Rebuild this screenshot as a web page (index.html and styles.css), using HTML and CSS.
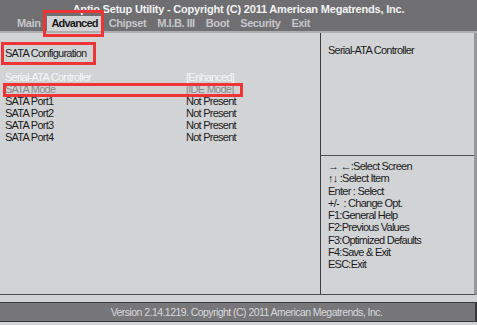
FILE: index.html
```html
<!DOCTYPE html>
<html lang="en">
<head>
    <meta charset="UTF-8">
    <title>Aptio Setup Utility</title>
    <link rel="stylesheet" href="styles.css">
</head>
<body>
    <div class="header">
        <div class="title">Aptio Setup Utility - Copyright (C) 2011 American Megatrends, Inc.</div>
        <div class="tabs">
            <span class="tab">Main</span>
            <span class="tab active">Advanced</span>
            <span class="tab">Chipset</span>
            <span class="tab">M.I.B. III</span>
            <span class="tab">Boot</span>
            <span class="tab">Security</span>
            <span class="tab">Exit</span>
        </div>
    </div>

    <div class="main">
        <div class="left">
            <div class="section"><span class="section-title marked">SATA Configuration</span></div>
            <div class="row selected"><span class="label">Serial-ATA Controller</span><span class="value">[Enhanced]</span></div>
            <div class="row disabled marked-row"><span class="label">SATA Mode</span><span class="value">[IDE Mode]</span></div>
            <div class="row"><span class="label">SATA Port1</span><span class="value">Not Present</span></div>
            <div class="row"><span class="label">SATA Port2</span><span class="value">Not Present</span></div>
            <div class="row"><span class="label">SATA Port3</span><span class="value">Not Present</span></div>
            <div class="row"><span class="label">SATA Port4</span><span class="value">Not Present</span></div>
        </div>
        <div class="right">
            <div class="help">Serial-ATA Controller</div>
            <div class="keys">
                <div>→ ←:Select Screen</div>
                <div>↑↓ :Select Item</div>
                <div>Enter : Select</div>
                <div>+/-&nbsp; : Change Opt.</div>
                <div>F1:General Help</div>
                <div>F2:Previous Values</div>
                <div>F3:Optimized Defaults</div>
                <div>F4:Save &amp; Exit</div>
                <div>ESC:Exit</div>
            </div>
        </div>
    </div>

    <div class="footer">Version 2.14.1219. Copyright (C) 2011 American Megatrends, Inc.</div>
</body>
</html>
```

FILE: styles.css
```css
body { margin: 0; width: 477px; height: 325px; overflow: hidden; background: #d2d3d5; font-family: "Liberation Sans", Arial, sans-serif; font-size: 11px; letter-spacing: -0.75px; color: #1c1c1c; }

.header { height: 31px; background: #6f6f72; border-bottom: 2px solid #aeaeb0; }
.title { padding-top: 2px; height: 14px; line-height: 14px; text-align: center; color: #f2f2f2; font-weight: bold; letter-spacing: -0.2px; }
.tabs { display: flex; padding-left: 13px; height: 15px; }
.tab { position: relative; padding: 0 4px; margin-right: 3px; line-height: 15px; font-weight: bold; letter-spacing: -0.4px; color: #c6c6c8; }
.tab.active { background: #d2d3d5; color: #1a1a1a; letter-spacing: -0.8px; }
.tab.active::after { content: ""; position: absolute; top: -6px; left: -4px; right: -2px; bottom: -6px; border: 3px solid #ee3434; }

.main { display: flex; height: 261px; border-bottom: 1px solid #505052; border-right: 3px solid #98989a; }
.left { width: 315px; padding: 14px 0 0 5px; border-right: 1px solid #3c3c3e; }
.section { height: 12px; line-height: 12px; margin-bottom: 12px; }
.marked { position: relative; }
.section-title::after { content: ""; position: absolute; top: -5px; left: -4px; right: -10px; bottom: -6px; border: 3px solid #ee3434; }
.row { position: relative; display: flex; height: 12px; line-height: 12px; }
.label { width: 181px; }
.selected { color: #f6f6f6; }
.disabled { color: #8a8a8c; }
.marked-row::after { content: ""; position: absolute; top: 0; left: -2px; width: 234px; bottom: -2px; border: 3px solid #ee3434; }

.right { flex: 1; display: flex; flex-direction: column; }
.help { height: 111px; padding: 11px 0 0 7px; line-height: 12px; border-bottom: 1px solid #505052; }
.keys { padding: 4px 0 0 7px; line-height: 12.3px; }

.footer { margin-top: 7px; padding-left: 18px; height: 18px; line-height: 18px; background: #77777a; border-top: 1px solid #3a3a3c; border-bottom: 1px solid #3a3a3c; border-right: 2px solid #3a3a3c; text-align: center; color: #d8d8da; font-size: 10.5px; letter-spacing: -0.55px; }
```
